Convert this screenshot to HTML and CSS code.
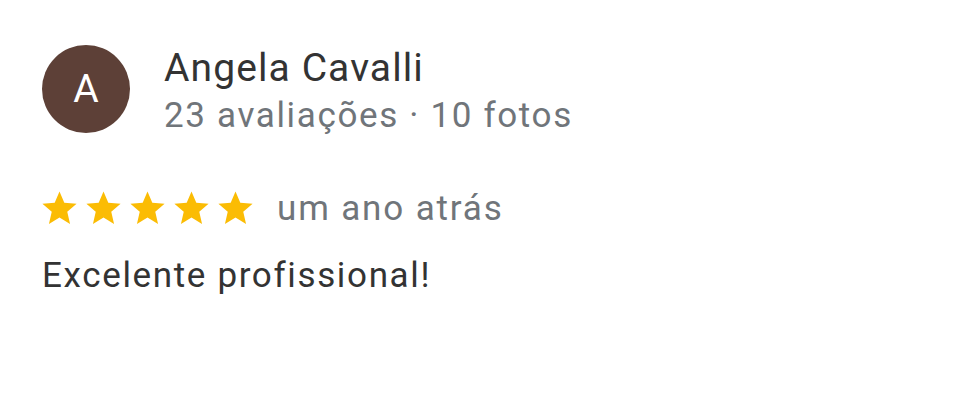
FILE: index.html
```html
<!DOCTYPE html>
<html lang="pt-BR">
<head>
    <meta charset="UTF-8">
    <title>Avaliação</title>
    <link rel="stylesheet" href="styles.css">
</head>
<body>
    <div class="review">
        <div class="review-header">
            <div class="avatar">A</div>
            <div class="author">
                <div class="author-name">Angela Cavalli</div>
                <div class="author-meta">23 avaliações · 10 fotos</div>
            </div>
        </div>

        <div class="rating">
            <div class="stars">
                <svg class="star" viewBox="0 0 24 24"><path d="M12 17.27L18.18 21l-1.64-7.03L22 9.24l-7.19-.61L12 2 9.19 8.63 2 9.24l5.46 4.73L5.82 21z"/></svg>
                <svg class="star" viewBox="0 0 24 24"><path d="M12 17.27L18.18 21l-1.64-7.03L22 9.24l-7.19-.61L12 2 9.19 8.63 2 9.24l5.46 4.73L5.82 21z"/></svg>
                <svg class="star" viewBox="0 0 24 24"><path d="M12 17.27L18.18 21l-1.64-7.03L22 9.24l-7.19-.61L12 2 9.19 8.63 2 9.24l5.46 4.73L5.82 21z"/></svg>
                <svg class="star" viewBox="0 0 24 24"><path d="M12 17.27L18.18 21l-1.64-7.03L22 9.24l-7.19-.61L12 2 9.19 8.63 2 9.24l5.46 4.73L5.82 21z"/></svg>
                <svg class="star" viewBox="0 0 24 24"><path d="M12 17.27L18.18 21l-1.64-7.03L22 9.24l-7.19-.61L12 2 9.19 8.63 2 9.24l5.46 4.73L5.82 21z"/></svg>
            </div>
            <span class="date">um ano atrás</span>
        </div>

        <p class="review-text">Excelente profissional!</p>
    </div>
</body>
</html>
```

FILE: styles.css
```css
* {
    margin: 0;
    padding: 0;
    box-sizing: border-box;
}

body {
    font-family: Roboto, 'Liberation Sans', sans-serif;
    background: #fff;
    color: #333;
}

.review {
    padding: 41px 40px 0 42px;
}

.review-header {
    display: flex;
    align-items: flex-start;
    gap: 34px;
}

.avatar {
    width: 88px;
    height: 88px;
    margin-top: 4px;
    border-radius: 50%;
    background: #5d4037;
    color: #fff;
    font-size: 39px;
    display: flex;
    align-items: center;
    justify-content: center;
    flex-shrink: 0;
}

.author {
    padding-top: 3px;
    line-height: 48px;
}

.author-name {
    font-size: 39px;
    letter-spacing: 1.1px;
    color: #333;
}

.author-meta {
    font-size: 35px;
    letter-spacing: 1.65px;
    color: #70757a;
}

.rating {
    display: flex;
    align-items: center;
    margin-top: 48px;
}

.stars {
    display: flex;
    gap: 3px;
    margin-left: -3px;
}

.star {
    width: 41px;
    height: 41px;
    fill: #fbbc04;
}

.date {
    margin-left: 21px;
    font-size: 35px;
    letter-spacing: 1.85px;
    color: #70757a;
}

.review-text {
    margin-top: 26px;
    font-size: 35px;
    letter-spacing: 1.65px;
    color: #333;
}
```
